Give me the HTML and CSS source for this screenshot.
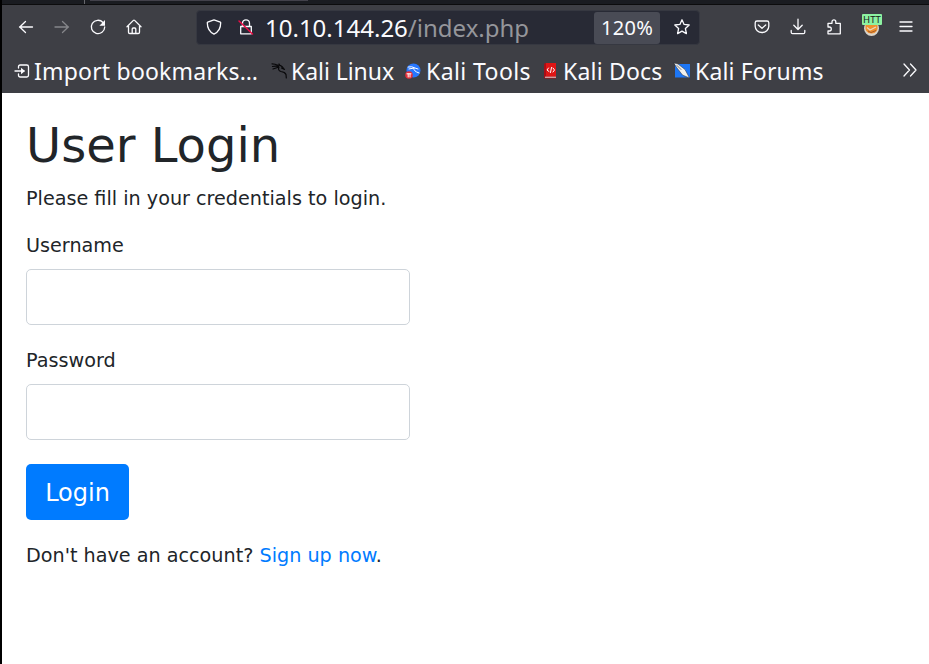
FILE: index.html
```html
<!DOCTYPE html>
<html lang="en">
<head>
<meta charset="utf-8">
<title>Login</title>
<link rel="stylesheet" href="styles.css">
</head>
<body>
<div class="window">
  <div class="tabs"><span class="tab-divider"></span><span class="tab-active"></span></div>
  <header class="toolbar">
    <nav class="nav-icons">
      <svg class="icon" viewBox="0 0 16 16"><path d="M14.500 8H1.500M7.500 2.500 1.800 8l5.700 5.500"/></svg>
      <svg class="icon dim" viewBox="0 0 16 16"><path d="M1 8h13.500M8.500 2.500 14.200 8l-5.700 5.500"/></svg>
      <svg class="icon" viewBox="0 0 16 16"><path d="M13 3.500A6.700 6.700 0 1 0 14.700 8"/><path class="solid" d="M15 1v5.700H9.400z"/></svg>
      <svg class="icon" viewBox="0 0 16 16"><path d="M1 7.700 7.400 1.400q.6-.6 1.200 0L15 7.700M2.500 7v6.200q0 1.300 1.300 1.300h8.400q1.300 0 1.300-1.300V7M6.200 14v-4q0-1 1-1h1.600q1 0 1 1v4"/></svg>
    </nav>
    <div class="urlbar">
      <svg class="icon shield" viewBox="0 0 16 16"><path d="M8 .9 14.300 3.200q.4.2.4.6c0 5-2 9.200-6.700 11.300C3.300 13 1.300 8.800 1.300 3.800q0-.4.4-.6z"/></svg>
      <svg class="icon lock" viewBox="0 0 16 16"><path d="M4.500 7.500V4.300a3.500 3.500 0 0 1 7 0v3.200M2.700 7.500h10.600v7.300H2.700z"/><path class="slash" d="m1 2 13.500 13"/></svg>
      <span class="address">10.10.144.26<span class="path">/index.php</span></span>
      <span class="zoom">120%</span>
      <svg class="icon star" viewBox="0 0 16 16"><path d="m8 .8 2.100 4.600 5.100.6-3.800 3.500 1 5.100L8 12.100l-4.400 2.500 1-5.100L.8 6l5.100-.6z"/></svg>
    </div>
    <div class="actions">
      <svg class="icon" viewBox="0 0 16 16"><path d="M3 2h10q1.800 0 1.800 1.800v3.500a6.800 6.200 0 0 1-13.600 0V3.800Q1.200 2 3 2zM4.300 6 8 9.300 11.700 6"/></svg>
      <svg class="icon" viewBox="0 0 16 16"><path d="M8 .2v10M3.800 6.200 8 10.500l4.200-4.300M1.200 11.500v1.700q0 1.500 1.500 1.500h10.600q1.500 0 1.500-1.500v-1.700"/></svg>
      <svg class="icon" viewBox="0 0 16 16"><path d="M2 7V4.300h4V2.800a1.900 1.900 0 0 1 3.800 0v1.500h4.500v10.500H2V12h1.300a1.900 1.900 0 0 0 0-4H2z"/></svg>
      <span class="proxy">
        <svg viewBox="0 0 20 22"><circle cx="8.500" cy="11.500" r="7.500" fill="#d9d4ca"/><path d="M2.500 8h12q1 8.500-6 8.500T2.500 8z" fill="#ef902d"/><path d="m4 10.500 3 2.500 6-3" fill="none" stroke="#e9d7bd" stroke-width="1.300"/><path d="m5 14 3 1.500 5-2" fill="none" stroke="#a65a28"/></svg>
        <span class="badge">HTT</span>
      </span>
      <svg class="icon menu" viewBox="0 0 16 16"><path d="M2 3h12M2 7.500h12M2 12h12"/></svg>
    </div>
  </header>
  <nav class="bookmarks">
    <a class="bm import"><svg class="icon" viewBox="0 0 16 16"><path d="M4.500 5V3.700q0-1.700 1.700-1.700h6.600q1.700 0 1.700 1.700v8.600q0 1.700-1.700 1.700H6.200q-1.700 0-1.700-1.700V11M1 8h9"/><path class="solid" d="M7 4.800 11 8l-4 3.200z"/></svg><span>Import bookmarks…</span></a>
    <a class="bm linux"><svg class="icon" viewBox="0 0 16 16"><path class="ink" d="M1 .8q3.500 0 5.500 1.400l3 .3 2 1.500 2 2.500-3-1.500M1.500 3.500q3-.8 6 0M2 6l6-2q-1.500 3.500 2 4.500 4 .5 5 3l.3 3.500M9 2.500 8 1"/></svg><span>Kali Linux</span></a>
    <a class="bm tools"><svg class="icon" viewBox="0 0 16 16"><circle cx="8.500" cy="7.500" r="7" fill="#2777ff" stroke="none"/><path class="thin" d="M3 4q4-1 7 1l3 1M4 6l5-1q-1 3 5 5"/><circle cx="4" cy="12" r="3.800" fill="#e52d38" stroke="none"/><path class="thin" d="M2 10.800h4M3.200 11v3M5 11v3"/></svg><span>Kali Tools</span></a>
    <a class="bm docs"><svg class="icon" viewBox="0 0 16 16"><path d="M2 1.500Q2 0 3.500 0H14v15.500H3.500Q2 15.500 2 14z" fill="#a90e16" stroke="none"/><path d="M4 0h10v13.500H4z" fill="#df1515" stroke="none"/><path d="M3 13.700h11v1H3z" fill="#ddd" stroke="none"/><path class="thin" d="M6.500 5 5 7l2 1.500M11 5l1.500 2-1.500 2M9.500 4.500l-1 5"/></svg><span>Kali Docs</span></a>
    <a class="bm forums"><svg class="icon" viewBox="0 0 16 16"><path d="M1 1h15v13.500H1z" fill="#1d76f5" stroke="none"/><path d="m0 0 4 1 7 5.500 4.500 8.500-7-3L3 5z" fill="#f1f1ee" stroke="#292b32" stroke-width=".5"/><path d="m3 2.500 4 4" stroke="#555" stroke-width=".8"/></svg><span>Kali Forums</span></a>
    <svg class="icon more" viewBox="0 0 16 16"><path d="m2 2 5.500 6L2 14M8.500 2l5.500 6-5.500 6"/></svg>
  </nav>
  <main class="page">
    <h1>User Login</h1>
    <p class="intro">Please fill in your credentials to login.</p>
    <form>
      <label for="username">Username</label>
      <input id="username" type="text">
      <label for="password">Password</label>
      <input id="password" type="password">
      <button type="button">Login</button>
    </form>
    <p class="signup">Don't have an account? <a>Sign up now</a>.</p>
  </main>
</div>
</body>
</html>
```
FILE: styles.css
```css
* { box-sizing: border-box; }
body { margin: 0; background: #fff; }
.window { height: 664px; border-left: 2px solid #000; overflow: hidden; font-family: "Noto Sans", sans-serif; color: #fbfbfe; }
.tabs { height: 5px; background: #1a1c21; border-bottom: 1px solid #0c0c0d; display: flex; }
.tab-divider { width: 1px; height: 4px; margin-left: 82px; background: #66676c; }
.tab-active { width: 218px; height: 1px; margin-left: 5px; background: #42414a; }
.toolbar { height: 45px; background: #3e3f45; display: flex; align-items: center; }
.icon { width: 16px; height: 16px; flex: none; fill: none; stroke: #fbfbfe; stroke-width: 1.3; stroke-linecap: round; stroke-linejoin: round; overflow: visible; }
.icon .solid { fill: #fbfbfe; stroke: none; }
.icon .slash { stroke: #ed0b45; stroke-width: 1.5; }
.icon .thin { stroke: #fff; stroke-width: 1; }
.icon .ink { stroke: #08080a; stroke-width: 1.2; }
.icon.dim { stroke: #85868a; }
.nav-icons { display: flex; gap: 20px; margin-left: 16px; width: 178px; }
.urlbar { width: 504px; height: 35px; background: #282a35; border: 1px solid #363841; border-radius: 4px; display: flex; align-items: center; }
.urlbar .icon, .nav-icons .icon, .actions .icon { margin-bottom: 1px; }
.shield { margin-left: 9px; }
.lock { margin-left: 16px; }
.address { width: 329px; margin-left: 11px; font-size: 24px; line-height: 33px; white-space: nowrap; }
.path { color: #95969b; }
.zoom { width: 66px; height: 32px; background: #494b55; border-radius: 3px; font-size: 20px; letter-spacing: .3px; line-height: 32px; text-align: center; }
.star { margin-left: 14px; }
.actions { display: flex; align-items: center; gap: 20px; margin-left: 54px; }
.proxy { width: 20px; height: 22px; position: relative; margin: 0 -5px 0 1px; }
.proxy svg { display: block; width: 20px; height: 22px; }
.badge { position: absolute; left: -1px; top: -3px; width: 20px; height: 11px; background: #8df2a1; border-radius: 1px; color: #172019; font-size: 9.5px; line-height: 11px; text-align: center; }
.bookmarks { height: 43px; padding-bottom: 2px; background: #3e3f45; display: flex; align-items: center; font-size: 23px; white-space: nowrap; }
.bm { display: flex; align-items: center; gap: 4px; flex: none; }
.import { width: 257px; padding-left: 12px; letter-spacing: .2px; }
.linux { width: 135px; padding-left: 12px; letter-spacing: -.05px; }
.tools { width: 137px; padding-left: 11px; gap: 5px; letter-spacing: .4px; }
.docs { width: 132px; padding-left: 11px; gap: 5px; letter-spacing: .2px; }
.forums { width: 236px; padding-left: 11px; gap: 5px; letter-spacing: .15px; }
.more { margin-left: 3px; margin-bottom: 1px; }
.page { padding: 24px; font: 19.2px/28.8px "DejaVu Sans", sans-serif; color: #212529; }
h1 { margin: 0 0 10.4px; font-size: 48px; font-weight: 400; line-height: 57.6px; }
p { margin: 0; }
form { display: flex; flex-direction: column; align-items: flex-start; width: 384px; margin-top: 18.2px; }
label { height: 29px; margin-bottom: 8px; }
input { width: 384px; height: 56px; border: 1px solid #ced4da; border-radius: 5px; padding: 8px 16px; margin: 0 0 22px; font: inherit; }
button { width: 103px; height: 56px; margin-top: 2px; border: 0; border-radius: 5px; padding: 2px 0 0; background: #007bff; color: #fff; font: 24px "DejaVu Sans", sans-serif; }
.signup { margin-top: 22px; }
.signup a { color: #007bff; }
```
